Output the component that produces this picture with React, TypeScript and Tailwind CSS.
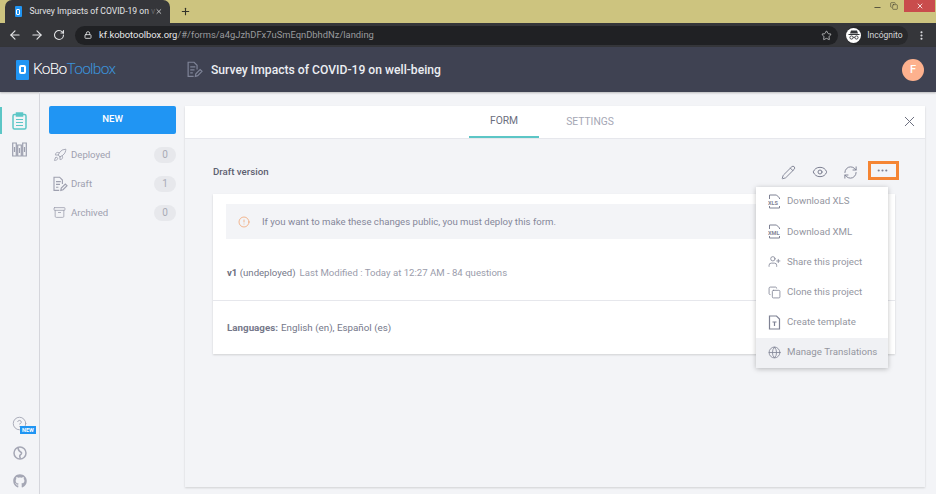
import React from "react";
import { ArrowLeft, ArrowRight, RotateCw, Lock, Star, Plus, X, Minus, EllipsisVertical, Pencil, Eye, RefreshCw, Rocket, Archive, CircleAlert, Globe, Copy, UserPlus, CircleHelp, Ellipsis } from "lucide-react";
import { FaGithub } from "react-icons/fa";

const DraftIcon = ({ c = "", s = 18 }: { c?: string; s?: number }) => (
  <svg width={s} height={s} viewBox="0 0 20 20" fill="none" stroke="currentColor" strokeWidth="1.4" className={c}>
    <path d="M13 10V5L9.5 1.5H2.5V18H9" />
    <path d="M5 7h6M5 10.5h5M5 14h3" />
    <path d="M11 18l.6-3 5-5 2.2 2.2-5 5z" />
  </svg>
);

const FileTag = ({ t }: { t: string }) => (
  <svg width="13" height="15" viewBox="0 0 13 15" fill="none" stroke="currentColor" strokeWidth="1">
    <path d="M1.5 5V1h7l3 3v1M1.5 12v2h10v-2" />
    <text x="0" y="11.2" fontSize="5.6" fontWeight="700" stroke="none" fill="currentColor" fontFamily="Roboto, sans-serif">{t}</text>
  </svg>
);

const TemplateIcon = () => (
  <svg width="13" height="15" viewBox="0 0 13 15" fill="none" stroke="currentColor" strokeWidth="1.2">
    <path d="M1.5 1h7l3 3v10h-10z" />
    <path d="M4.5 7h4M6.5 7v4" />
  </svg>
);

const Incognito = () => (
  <svg width="12" height="12" viewBox="0 0 12 12" fill="#35363a">
    <path d="M3 1.5h6l1 3H2zM0.5 5h11v.9h-11z" />
    <circle cx="3.5" cy="8.5" r="1.6" fill="none" stroke="#35363a" strokeWidth=".9" />
    <circle cx="8.5" cy="8.5" r="1.6" fill="none" stroke="#35363a" strokeWidth=".9" />
    <path d="M5 8.3h2" stroke="#35363a" strokeWidth=".8" />
  </svg>
);

const Clipboard = () => (
  <svg width="15" height="18" viewBox="0 0 15 18" fill="none" stroke="#5cc6c6" strokeWidth="1.5">
    <rect x="1" y="2.5" width="13" height="14.5" rx="1.5" />
    <path d="M4.5 1h6v3h-6z" fill="#5cc6c6" />
    <path d="M4 7.5h7M4 10.5h7M4 13.5h7" strokeWidth="1.2" />
  </svg>
);

const Library = () => (
  <svg width="15" height="15" viewBox="0 0 15 15" fill="none" stroke="#9c9fae" strokeWidth="1.2">
    <path d="M.7 1h3.6v13H.7zM5.7 3h3.6v11H5.7zM10.7 1h3.6v13h-3.6z" />
    <path d="M2.5 5v5M7.5 6v5M12.5 5v5" />
  </svg>
);

const SupportIcon = () => (
  <svg width="14" height="14" viewBox="0 0 14 14" fill="none" stroke="#a5a7b5" strokeWidth="1.5">
    <circle cx="7" cy="7" r="6" />
    <path d="M5 1.6C5.2 4 6.5 5.5 8 6.2 9 6.7 8.6 8 7.6 8.6 6.6 9.2 6.6 11 7.5 12.6" />
  </svg>
);

const KoboMark = () => (
  <div className="flex h-[20px] w-[13px] items-center justify-center rounded-[1px] bg-[#2095f3]">
    <div className="h-[9px] w-[7px] rounded-[2px] border-2 border-white" />
  </div>
);

function SideItem({ icon, label, n }: { icon: React.ReactNode; label: string; n: string }) {
  return (
    <div className="flex h-[29px] items-center text-[#9ea0af]">
      <div className="flex w-[21px] justify-center">{icon}</div>
      <span className="ml-[1px] flex-1 pt-[1px] text-[9.6px]">{label}</span>
      <span className="flex h-[16px] w-[22px] items-center justify-center rounded-full bg-[#e7e8ec] text-[10px] text-[#a9abb6]">{n}</span>
    </div>
  );
}

function MenuItem({ icon, label, active }: { icon: React.ReactNode; label: string; active?: boolean }) {
  return (
    <div className={`flex h-[30.2px] items-center pb-[1px] pl-[12px] ${active ? "bg-[#f0f1f4]" : ""}`}>
      <div className="flex w-[13px] justify-center text-[#7f8294]">{icon}</div>
      <span className="ml-[6px] text-[9.7px] text-[#94969f]">{label}</span>
    </div>
  );
}

export default function App() {
  return (
    <div className="flex h-[494px] w-[936px] flex-col overflow-hidden bg-[#f3f4f7] font-['Roboto',sans-serif]">
      {/* tab strip */}
      <div className="flex h-[23px] items-end bg-[#cdc47f] pl-[5px] pr-[1px]">
        <div className="flex h-[23px] w-[165px] items-center rounded-t-[7px] bg-[#35363a] pl-[10px] pr-[7px]">
          <div className="flex h-[11px] w-[8px] items-center justify-center rounded-[1px] bg-[#2095f3]">
            <div className="h-[6px] w-[4px] rounded-[1px] border border-white" />
          </div>
          <span className="ml-[7.5px] flex-1 whitespace-nowrap text-[8.6px] text-[#e3e4e6]">Survey Impacts of COVID-19 on <span className="text-[#66676b]">v</span></span>
          <X size={9} strokeWidth={2.4} className="text-[#e3e4e6]" />
        </div>
        <Plus size={11} strokeWidth={2.4} className="mb-[6px] ml-[10px] text-[#33332a]" />
        <div className="flex-1" />
        <div className="flex h-[12px] items-center self-start">
          <Minus size={9} strokeWidth={2} className="mr-[8px] mt-[2px] text-[#33332a]" />
          <Copy size={8} strokeWidth={1.6} className="mr-[6px] text-[#33332a]" />
          <div className="flex h-[12px] w-[31px] items-center justify-center bg-[#c94c4c]">
            <X size={8} strokeWidth={2.4} className="text-white" />
          </div>
        </div>
      </div>
      {/* toolbar */}
      <div className="flex h-[24px] items-center bg-[#35363a] pl-[8px] pr-[9px]">
        <ArrowLeft size={14} strokeWidth={2} className="text-[#e3e4e6]" />
        <ArrowRight size={14} strokeWidth={2} className="ml-[8px] text-[#e3e4e6]" />
        <RotateCw size={12} strokeWidth={2.2} className="ml-[9px] text-[#e3e4e6]" />
        <div className="ml-[10px] flex h-[19px] w-[765px] items-center rounded-full bg-[#202124] pl-[9px] pr-[6px]">
          <Lock size={8} strokeWidth={2.6} className="text-[#e3e4e6]" />
          <span className="ml-[7px] flex-1 whitespace-nowrap text-[9.4px] text-[#9a9b9e]">
            <span className="text-[#e8e9ea]">kf.kobotoolbox.org</span>/#/forms/a4gJzhDFx7uSmEqnDbhdNz/landing
          </span>
          <Star size={11} strokeWidth={1.6} className="text-[#d6d7d9]" />
        </div>
        <div className="ml-[8px] flex h-[19px] w-[62px] items-center rounded-full bg-[#28292c] text-[8.5px] text-[#d5d6d8]">
          <div className="flex h-[15px] w-[15px] items-center justify-center rounded-full bg-white"><Incognito /></div>
          <span className="ml-[6px]">Incógnito</span>
        </div>
        <EllipsisVertical size={11} strokeWidth={2.6} className="ml-[8px] text-[#e3e4e6]" />
      </div>
      {/* app header */}
      <div className="flex h-[45px] items-center bg-[#3f4252] pl-[16px] pr-[12px] shadow-[0_1px_2px_rgba(0,0,0,.25)]">
        <KoboMark />
        <div className="ml-[4px] w-[153px] text-[15.5px] font-light tracking-[-.75px] text-white">
          KoBo<span className="text-[#3b93db]">Toolbox</span>
        </div>
        <DraftIcon s={17} c="text-[#7f8498]" />
        <div className="ml-[8px] flex-1 pt-[1px] text-[12.15px] font-medium text-[#eceef2]">Survey Impacts of COVID-19 on well-being</div>
        <div className="mt-[1px] flex h-[22px] w-[22px] items-center justify-center rounded-full bg-[#fdb18e] text-[11px] font-medium text-white">F</div>
      </div>
      {/* body */}
      <div className="flex min-h-0 flex-1">
        {/* rail */}
        <div className="flex w-[40px] flex-col items-center border-r border-[#d5d6dc] pb-[6px] pt-[14px]">
          <div className="relative flex h-[28px] w-full items-center justify-center pt-[1px]">
            <div className="absolute left-0 top-[1px] h-[27px] w-[2px] bg-[#5cc6c6]" />
            <Clipboard />
          </div>
          <div className="mt-[8px]"><Library /></div>
          <div className="flex-1" />
          <div className="relative text-[#a5a7b5]">
            <CircleHelp size={15} strokeWidth={1.5} />
            <span className="absolute left-[8px] top-[10px] flex h-[8px] w-[16px] items-center justify-center bg-[#2095f3] text-[5.5px] font-bold text-white">NEW</span>
          </div>
          <div className="mt-[15px]"><SupportIcon /></div>
          <FaGithub size={14} className="mt-[14px] text-[#a5a7b5]" />
        </div>
        {/* sidebar */}
        <div className="w-[145px] pl-[9px] pr-[9px] pt-[14px]">
          <div className="flex h-[28px] items-center justify-center rounded-[2px] bg-[#2095f3] pb-[1px] text-[9.6px] font-medium text-white">NEW</div>
          <div className="mt-[6px]">
            <SideItem icon={<Rocket size={14} strokeWidth={1.5} />} label="Deployed" n="0" />
            <SideItem icon={<DraftIcon s={16} />} label="Draft" n="1" />
            <SideItem icon={<Archive size={13} strokeWidth={1.5} />} label="Archived" n="0" />
          </div>
        </div>
        {/* main */}
        <div className="mb-[7px] mr-[11px] mt-[14px] flex flex-1 flex-col bg-[#f3f4f7] shadow-[0_1px_2px_rgba(0,0,0,.15)]">
          <div className="relative flex h-[33px] items-stretch justify-center border-b border-[#e6e7ec] bg-white pr-[16px] text-[10.3px]">
            <div className="flex w-[70px] items-center justify-center border-b-2 border-[#5cc6c6] text-[#6b6e7e]">FORM</div>
            <div className="ml-[16px] flex w-[70px] items-center justify-center text-[#a5a7b5]">SETTINGS</div>
            <X size={17} strokeWidth={1.4} className="absolute right-[7px] top-[7px] text-[#6b6e7e]" />
          </div>
          <div className="relative flex-1 pl-[28px] pr-[26px] pt-[22px]">
            <div className="flex h-[22px] items-center">
              <span className="flex-1 pt-[1px] text-[9.7px] font-medium text-[#5d6070]">Draft version</span>
              <Pencil size={15} strokeWidth={1.5} className="text-[#7d8092]" />
              <Eye size={16} strokeWidth={1.5} className="ml-[16px] text-[#7d8092]" />
              <RefreshCw size={15} strokeWidth={1.5} className="ml-[15px] text-[#7d8092]" />
              <div className="ml-[10px] flex h-[19px] w-[31px] items-center justify-center self-start border-[3px] border-[#f58533] pr-[3px]">
                <Ellipsis size={13} strokeWidth={2} className="text-[#7d8092]" />
              </div>
            </div>
            <div className="mr-[4px] mt-[11px] bg-white shadow-[0_1px_2px_rgba(0,0,0,.15)]">
              <div className="px-[13px] pt-[10px]">
                <div className="flex h-[35px] items-center bg-[#f3f4f7] pl-[12px]">
                  <CircleAlert size={12} strokeWidth={1.5} className="text-[#f0a06c]" />
                  <span className="ml-[12px] pt-[1px] text-[9.6px] text-[#85879a]">If you want to make these changes public, you must deploy this form.</span>
                </div>
              </div>
              <div className="flex h-[62px] items-center border-b border-[#e6e7ec] px-[14px] pt-[8px] text-[9.6px] text-[#75788a]">
                <span><b className="font-bold text-[#6b6e7e]">v1</b> (undeployed)</span>
                <span className="ml-[4px] text-[#9a9cab]">Last Modified : Today at 12:27 AM - 84 questions</span>
              </div>
              <div className="flex h-[53px] items-center px-[14px] pt-[1px] text-[9.8px] text-[#75788a]">
                <b className="mr-[3px] font-bold">Languages:</b> English (en), Español (es)
              </div>
            </div>
            {/* dropdown */}
            <div className="absolute right-[37px] top-[48px] w-[132px] bg-white shadow-[0_1px_5px_rgba(0,0,0,.25)]">
              <MenuItem icon={<FileTag t="XLS" />} label="Download XLS" />
              <MenuItem icon={<FileTag t="XML" />} label="Download XML" />
              <MenuItem icon={<UserPlus size={13} strokeWidth={1.5} />} label="Share this project" />
              <MenuItem icon={<Copy size={13} strokeWidth={1.5} />} label="Clone this project" />
              <MenuItem icon={<TemplateIcon />} label="Create template" />
              <MenuItem icon={<Globe size={13} strokeWidth={1.5} />} label="Manage Translations" active />
            </div>
          </div>
        </div>
      </div>
    </div>
  );
}
